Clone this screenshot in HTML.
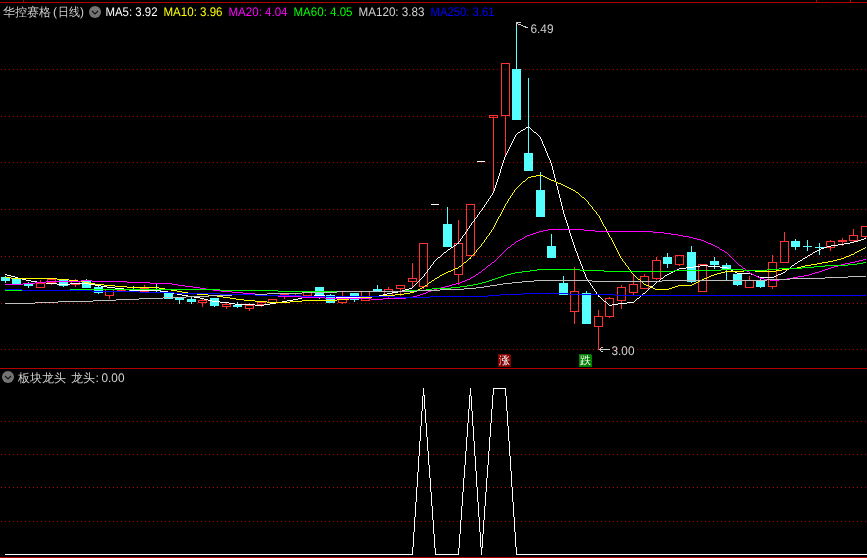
<!DOCTYPE html>
<html lang="zh"><head><meta charset="utf-8"><title>华控赛格(日线)</title>
<style>html,body{margin:0;padding:0;background:#000;overflow:hidden}svg{display:block;position:absolute;left:0;top:0}svg.txt{will-change:transform}</style></head>
<body>
<svg width="867" height="558" viewBox="0 0 867 558" shape-rendering="crispEdges">
<rect width="867" height="558" fill="#000"/>
<line x1="1" y1="69.5" x2="867" y2="69.5" stroke="#b00000" stroke-width="1" stroke-dasharray="1 3"/>
<line x1="1" y1="116.5" x2="867" y2="116.5" stroke="#b00000" stroke-width="1" stroke-dasharray="1 3"/>
<line x1="1" y1="162.5" x2="867" y2="162.5" stroke="#b00000" stroke-width="1" stroke-dasharray="1 3"/>
<line x1="1" y1="209.5" x2="867" y2="209.5" stroke="#b00000" stroke-width="1" stroke-dasharray="1 3"/>
<line x1="1" y1="256.5" x2="867" y2="256.5" stroke="#b00000" stroke-width="1" stroke-dasharray="1 3"/>
<line x1="1" y1="303.5" x2="867" y2="303.5" stroke="#b00000" stroke-width="1" stroke-dasharray="1 3"/>
<line x1="1" y1="349.5" x2="867" y2="349.5" stroke="#b00000" stroke-width="1" stroke-dasharray="1 3"/>
<line x1="1" y1="421.5" x2="867" y2="421.5" stroke="#b00000" stroke-width="1" stroke-dasharray="1 3"/>
<line x1="1" y1="454.5" x2="867" y2="454.5" stroke="#b00000" stroke-width="1" stroke-dasharray="1 3"/>
<line x1="1" y1="487.5" x2="867" y2="487.5" stroke="#b00000" stroke-width="1" stroke-dasharray="1 3"/>
<line x1="1" y1="521.5" x2="867" y2="521.5" stroke="#b00000" stroke-width="1" stroke-dasharray="1 3"/>
<rect x="0" y="2" width="867" height="1" fill="#b00000"/>
<rect x="23" y="0" width="1" height="3" fill="#b00000"/>
<rect x="816" y="0" width="1" height="3" fill="#b00000"/>
<rect x="850" y="0" width="1" height="3" fill="#b00000"/>
<rect x="0" y="368" width="867" height="1" fill="#b00000"/>
<rect x="0" y="557" width="867" height="1" fill="#b00000"/>
<rect x="5" y="276" width="1" height="7" fill="#54ffff"/>
<rect x="1" y="277" width="9" height="4" fill="#54ffff"/>
<rect x="16" y="278" width="1" height="6" fill="#54ffff"/>
<rect x="12" y="278" width="9" height="6" fill="#54ffff"/>
<rect x="28" y="282" width="1" height="6" fill="#54ffff"/>
<rect x="24" y="284" width="9" height="2" fill="#54ffff"/>
<rect x="40" y="280" width="1" height="3" fill="#ff3232"/>
<rect x="36.5" y="283.5" width="8" height="4" fill="none" stroke="#ff3232" stroke-width="1"/>
<rect x="51" y="283" width="1" height="2" fill="#ff3232"/>
<rect x="47.5" y="279.5" width="8" height="3" fill="none" stroke="#ff3232" stroke-width="1"/>
<rect x="63" y="280" width="1" height="7" fill="#54ffff"/>
<rect x="59" y="280" width="9" height="6" fill="#54ffff"/>
<rect x="75" y="279" width="1" height="2" fill="#ff3232"/>
<rect x="75" y="285" width="1" height="2" fill="#ff3232"/>
<rect x="71.5" y="281.5" width="8" height="3" fill="none" stroke="#ff3232" stroke-width="1"/>
<rect x="86" y="279" width="1" height="9" fill="#54ffff"/>
<rect x="82" y="280" width="9" height="8" fill="#54ffff"/>
<rect x="98" y="286" width="1" height="8" fill="#54ffff"/>
<rect x="94" y="287" width="9" height="6" fill="#54ffff"/>
<rect x="109" y="296" width="1" height="3" fill="#ff3232"/>
<rect x="105.5" y="289.5" width="8" height="6" fill="none" stroke="#ff3232" stroke-width="1"/>
<rect x="117" y="290" width="9" height="1" fill="#ff3232"/>
<rect x="133" y="286" width="1" height="5" fill="#54ffff"/>
<rect x="129" y="289" width="9" height="2" fill="#54ffff"/>
<rect x="144" y="285" width="1" height="3" fill="#ff3232"/>
<rect x="140.5" y="288.5" width="8" height="3" fill="none" stroke="#ff3232" stroke-width="1"/>
<rect x="156" y="284" width="1" height="9" fill="#54ffff"/>
<rect x="152" y="290" width="9" height="1" fill="#54ffff"/>
<rect x="168" y="293" width="1" height="6" fill="#54ffff"/>
<rect x="164" y="293" width="9" height="6" fill="#54ffff"/>
<rect x="179" y="298" width="1" height="6" fill="#54ffff"/>
<rect x="175" y="298" width="9" height="2" fill="#54ffff"/>
<rect x="191" y="297" width="1" height="7" fill="#54ffff"/>
<rect x="187" y="299" width="9" height="3" fill="#54ffff"/>
<rect x="202" y="298" width="1" height="2" fill="#ff3232"/>
<rect x="202" y="303" width="1" height="4" fill="#ff3232"/>
<rect x="198.5" y="300.5" width="8" height="2" fill="none" stroke="#ff3232" stroke-width="1"/>
<rect x="214" y="298" width="1" height="9" fill="#54ffff"/>
<rect x="210" y="298" width="9" height="8" fill="#54ffff"/>
<rect x="226" y="303" width="1" height="1" fill="#ff3232"/>
<rect x="226" y="307" width="1" height="2" fill="#ff3232"/>
<rect x="222.5" y="304.5" width="8" height="2" fill="none" stroke="#ff3232" stroke-width="1"/>
<rect x="237" y="302" width="1" height="6" fill="#54ffff"/>
<rect x="233" y="305" width="9" height="2" fill="#54ffff"/>
<rect x="249" y="303" width="1" height="2" fill="#ff3232"/>
<rect x="249" y="309" width="1" height="2" fill="#ff3232"/>
<rect x="245.5" y="305.5" width="8" height="3" fill="none" stroke="#ff3232" stroke-width="1"/>
<rect x="261" y="305" width="1" height="2" fill="#ff3232"/>
<rect x="257.5" y="302.5" width="8" height="2" fill="none" stroke="#ff3232" stroke-width="1"/>
<rect x="268.5" y="299.5" width="8" height="3" fill="none" stroke="#ff3232" stroke-width="1"/>
<rect x="284" y="295" width="1" height="4" fill="#ff3232"/>
<rect x="280" y="294" width="9" height="1" fill="#ff3232"/>
<rect x="295" y="294" width="1" height="1" fill="#ff3232"/>
<rect x="291" y="293" width="9" height="1" fill="#ff3232"/>
<rect x="303.5" y="292.5" width="8" height="3" fill="none" stroke="#ff3232" stroke-width="1"/>
<rect x="319" y="287" width="1" height="12" fill="#54ffff"/>
<rect x="315" y="287" width="9" height="9" fill="#54ffff"/>
<rect x="330" y="294" width="1" height="9" fill="#54ffff"/>
<rect x="326" y="295" width="9" height="8" fill="#54ffff"/>
<rect x="342" y="292" width="1" height="5" fill="#ff3232"/>
<rect x="342" y="303" width="1" height="1" fill="#ff3232"/>
<rect x="338.5" y="297.5" width="8" height="5" fill="none" stroke="#ff3232" stroke-width="1"/>
<rect x="354" y="293" width="1" height="9" fill="#54ffff"/>
<rect x="350" y="293" width="9" height="7" fill="#54ffff"/>
<rect x="361.5" y="291.5" width="8" height="9" fill="none" stroke="#ff3232" stroke-width="1"/>
<rect x="377" y="285" width="1" height="6" fill="#54ffff"/>
<rect x="373" y="289" width="9" height="2" fill="#54ffff"/>
<rect x="388" y="287" width="1" height="2" fill="#ff3232"/>
<rect x="388" y="297" width="1" height="1" fill="#ff3232"/>
<rect x="384.5" y="289.5" width="8" height="7" fill="none" stroke="#ff3232" stroke-width="1"/>
<rect x="400" y="289" width="1" height="7" fill="#ff3232"/>
<rect x="396.5" y="285.5" width="8" height="3" fill="none" stroke="#ff3232" stroke-width="1"/>
<rect x="412" y="263" width="1" height="15" fill="#ff3232"/>
<rect x="412" y="282" width="1" height="5" fill="#ff3232"/>
<rect x="408.5" y="278.5" width="8" height="3" fill="none" stroke="#ff3232" stroke-width="1"/>
<rect x="423" y="287" width="1" height="2" fill="#ff3232"/>
<rect x="419.5" y="243.5" width="8" height="43" fill="none" stroke="#ff3232" stroke-width="1"/>
<rect x="431" y="204" width="8" height="1" fill="#fff"/>
<rect x="447" y="207" width="1" height="40" fill="#54ffff"/>
<rect x="443" y="224" width="9" height="23" fill="#54ffff"/>
<rect x="458" y="220" width="1" height="23" fill="#ff3232"/>
<rect x="458" y="275" width="1" height="10" fill="#ff3232"/>
<rect x="454.5" y="243.5" width="8" height="31" fill="none" stroke="#ff3232" stroke-width="1"/>
<rect x="466.5" y="204.5" width="8" height="51" fill="none" stroke="#ff3232" stroke-width="1"/>
<rect x="477" y="161" width="8" height="1" fill="#fff"/>
<rect x="493" y="118" width="1" height="74" fill="#ff3232"/>
<rect x="489.5" y="115.5" width="8" height="2" fill="none" stroke="#ff3232" stroke-width="1"/>
<rect x="505" y="116" width="1" height="40" fill="#ff3232"/>
<rect x="501.5" y="63.5" width="8" height="52" fill="none" stroke="#ff3232" stroke-width="1"/>
<rect x="516" y="24" width="1" height="96" fill="#54ffff"/>
<rect x="512" y="69" width="9" height="51" fill="#54ffff"/>
<rect x="528" y="78" width="1" height="93" fill="#54ffff"/>
<rect x="524" y="153" width="9" height="18" fill="#54ffff"/>
<rect x="540" y="172" width="1" height="45" fill="#54ffff"/>
<rect x="536" y="190" width="9" height="27" fill="#54ffff"/>
<rect x="551" y="234" width="1" height="24" fill="#54ffff"/>
<rect x="547" y="246" width="9" height="12" fill="#54ffff"/>
<rect x="563" y="276" width="1" height="19" fill="#54ffff"/>
<rect x="559" y="283" width="9" height="12" fill="#54ffff"/>
<rect x="574" y="267" width="1" height="24" fill="#ff3232"/>
<rect x="574" y="312" width="1" height="12" fill="#ff3232"/>
<rect x="570.5" y="291.5" width="8" height="20" fill="none" stroke="#ff3232" stroke-width="1"/>
<rect x="586" y="291" width="1" height="33" fill="#54ffff"/>
<rect x="582" y="293" width="9" height="31" fill="#54ffff"/>
<rect x="598" y="310" width="1" height="6" fill="#ff3232"/>
<rect x="598" y="327" width="1" height="23" fill="#ff3232"/>
<rect x="594.5" y="316.5" width="8" height="10" fill="none" stroke="#ff3232" stroke-width="1"/>
<rect x="609" y="297" width="1" height="1" fill="#ff3232"/>
<rect x="609" y="317" width="1" height="1" fill="#ff3232"/>
<rect x="605.5" y="298.5" width="8" height="18" fill="none" stroke="#ff3232" stroke-width="1"/>
<rect x="621" y="285" width="1" height="2" fill="#ff3232"/>
<rect x="621" y="301" width="1" height="8" fill="#ff3232"/>
<rect x="617.5" y="287.5" width="8" height="13" fill="none" stroke="#ff3232" stroke-width="1"/>
<rect x="633" y="275" width="1" height="9" fill="#ff3232"/>
<rect x="633" y="293" width="1" height="2" fill="#ff3232"/>
<rect x="629.5" y="284.5" width="8" height="8" fill="none" stroke="#ff3232" stroke-width="1"/>
<rect x="644" y="274" width="1" height="2" fill="#ff3232"/>
<rect x="640.5" y="276.5" width="8" height="12" fill="none" stroke="#ff3232" stroke-width="1"/>
<rect x="656" y="257" width="1" height="3" fill="#ff3232"/>
<rect x="656" y="279" width="1" height="1" fill="#ff3232"/>
<rect x="652.5" y="260.5" width="8" height="18" fill="none" stroke="#ff3232" stroke-width="1"/>
<rect x="667" y="253" width="1" height="15" fill="#54ffff"/>
<rect x="663" y="257" width="9" height="7" fill="#54ffff"/>
<rect x="679" y="265" width="1" height="1" fill="#ff3232"/>
<rect x="675.5" y="255.5" width="8" height="9" fill="none" stroke="#ff3232" stroke-width="1"/>
<rect x="691" y="246" width="1" height="37" fill="#54ffff"/>
<rect x="687" y="252" width="9" height="30" fill="#54ffff"/>
<rect x="698.5" y="264.5" width="8" height="27" fill="none" stroke="#ff3232" stroke-width="1"/>
<rect x="714" y="257" width="1" height="12" fill="#54ffff"/>
<rect x="710" y="261" width="9" height="4" fill="#54ffff"/>
<rect x="726" y="263" width="1" height="18" fill="#54ffff"/>
<rect x="722" y="265" width="9" height="5" fill="#54ffff"/>
<rect x="737" y="274" width="1" height="12" fill="#54ffff"/>
<rect x="733" y="274" width="9" height="11" fill="#54ffff"/>
<rect x="749" y="276" width="1" height="4" fill="#ff3232"/>
<rect x="745.5" y="280.5" width="8" height="7" fill="none" stroke="#ff3232" stroke-width="1"/>
<rect x="760" y="279" width="1" height="9" fill="#54ffff"/>
<rect x="756" y="280" width="9" height="7" fill="#54ffff"/>
<rect x="772" y="255" width="1" height="7" fill="#ff3232"/>
<rect x="772" y="287" width="1" height="2" fill="#ff3232"/>
<rect x="768.5" y="262.5" width="8" height="24" fill="none" stroke="#ff3232" stroke-width="1"/>
<rect x="784" y="232" width="1" height="9" fill="#ff3232"/>
<rect x="780.5" y="241.5" width="8" height="21" fill="none" stroke="#ff3232" stroke-width="1"/>
<rect x="795" y="239" width="1" height="11" fill="#54ffff"/>
<rect x="791" y="241" width="9" height="6" fill="#54ffff"/>
<rect x="807" y="240" width="1" height="11" fill="#54ffff"/>
<rect x="803" y="246" width="9" height="1" fill="#54ffff"/>
<rect x="819" y="243" width="1" height="12" fill="#54ffff"/>
<rect x="815" y="247" width="9" height="1" fill="#54ffff"/>
<rect x="830" y="240" width="1" height="1" fill="#ff3232"/>
<rect x="830" y="248" width="1" height="3" fill="#ff3232"/>
<rect x="826.5" y="241.5" width="8" height="6" fill="none" stroke="#ff3232" stroke-width="1"/>
<rect x="842" y="238" width="1" height="8" fill="#ff3232"/>
<rect x="838" y="240" width="9" height="2" fill="#ff3232"/>
<rect x="853" y="229" width="1" height="6" fill="#ff3232"/>
<rect x="853" y="241" width="1" height="2" fill="#ff3232"/>
<rect x="849.5" y="235.5" width="8" height="5" fill="none" stroke="#ff3232" stroke-width="1"/>
<rect x="865" y="237" width="1" height="1" fill="#ff3232"/>
<rect x="861.5" y="226.5" width="8" height="10" fill="none" stroke="#ff3232" stroke-width="1"/>
<path fill="#ffffff" d="M526 127h2v1h-2zM523 129h2v1h-2zM521 130h2v1h-2zM518 132h2v1h-2zM534 132h2v1h-2zM864 238h2v1h-2zM861 239h3v1h-3zM858 240h3v1h-3zM854 241h4v1h-4zM850 242h4v1h-4zM457 243h2v1h-2zM844 243h6v1h-6zM838 244h6v1h-6zM454 245h2v1h-2zM831 245h7v1h-7zM827 246h4v1h-4zM451 247h2v1h-2zM824 247h3v1h-3zM821 248h3v1h-3zM448 249h2v1h-2zM819 249h2v1h-2zM817 250h2v1h-2zM815 251h2v1h-2zM444 252h2v1h-2zM813 252h2v1h-2zM810 254h2v1h-2zM808 255h2v1h-2zM438 257h2v1h-2zM805 257h2v1h-2zM803 258h2v1h-2zM800 260h2v1h-2zM798 261h2v1h-2zM795 263h2v1h-2zM700 265h8v1h-8zM792 265h2v1h-2zM694 266h6v1h-6zM708 266h12v1h-12zM686 267h8v1h-8zM720 267h7v1h-7zM679 268h7v1h-7zM727 268h2v1h-2zM677 269h2v1h-2zM729 269h2v1h-2zM787 269h2v1h-2zM675 270h2v1h-2zM731 270h2v1h-2zM673 271h2v1h-2zM733 271h2v1h-2zM671 272h2v1h-2zM735 272h2v1h-2zM783 272h2v1h-2zM669 273h2v1h-2zM737 273h14v1h-14zM781 273h2v1h-2zM5 274h2v1h-2zM667 274h2v1h-2zM751 274h3v1h-3zM778 274h3v1h-3zM7 275h4v1h-4zM665 275h2v1h-2zM754 275h2v1h-2zM776 275h2v1h-2zM11 276h4v1h-4zM756 276h3v1h-3zM774 276h2v1h-2zM15 277h3v1h-3zM759 277h15v1h-15zM18 278h4v1h-4zM661 278h2v1h-2zM22 279h4v1h-4zM26 280h5v1h-5zM31 281h6v1h-6zM657 281h2v1h-2zM37 282h9v1h-9zM46 283h11v1h-11zM70 283h19v1h-19zM57 284h13v1h-13zM89 284h6v1h-6zM95 285h6v1h-6zM101 286h6v1h-6zM651 286h2v1h-2zM107 287h8v1h-8zM115 288h9v1h-9zM409 288h3v1h-3zM124 289h6v1h-6zM405 289h4v1h-4zM130 290h30v1h-30zM402 290h3v1h-3zM160 291h8v1h-8zM398 291h4v1h-4zM168 292h5v1h-5zM392 292h6v1h-6zM173 293h4v1h-4zM387 293h5v1h-5zM643 293h2v1h-2zM177 294h5v1h-5zM383 294h4v1h-4zM182 295h6v1h-6zM314 295h11v1h-11zM379 295h4v1h-4zM188 296h6v1h-6zM306 296h8v1h-8zM325 296h11v1h-11zM360 296h19v1h-19zM598 296h2v1h-2zM194 297h6v1h-6zM302 297h4v1h-4zM336 297h24v1h-24zM200 298h4v1h-4zM298 298h4v1h-4zM637 298h2v1h-2zM204 299h4v1h-4zM293 299h5v1h-5zM208 300h4v1h-4zM287 300h6v1h-6zM212 301h8v1h-8zM282 301h5v1h-5zM604 301h2v1h-2zM220 302h9v1h-9zM276 302h6v1h-6zM627 302h7v1h-7zM229 303h6v1h-6zM270 303h6v1h-6zM618 303h9v1h-9zM235 304h20v1h-20zM264 304h6v1h-6zM612 304h6v1h-6zM255 305h9v1h-9zM609 305h3v1h-3zM434 261h1v1h-1zM554 174h1v4h-1zM504 157h1v3h-1zM492 193h1v2h-1zM517 133h1v1h-1zM557 186h1v4h-1zM464 234h1v1h-1zM509 147h1v2h-1zM577 253h1v3h-1zM476 217h1v1h-1zM532 130h1v1h-1zM649 288h1v1h-1zM570 233h1v3h-1zM560 198h1v4h-1zM488 199h1v2h-1zM543 144h1v2h-1zM563 210h1v4h-1zM556 182h1v4h-1zM653 285h1v1h-1zM501 166h1v3h-1zM567 223h1v3h-1zM550 160h1v3h-1zM786 270h1v1h-1zM500 169h1v4h-1zM656 282h1v1h-1zM553 170h1v4h-1zM413 286h1v1h-1zM660 279h1v1h-1zM542 141h1v3h-1zM508 149h1v2h-1zM797 262h1v1h-1zM640 296h1v1h-1zM581 264h1v2h-1zM573 242h1v3h-1zM425 273h1v1h-1zM460 239h1v2h-1zM790 267h1v1h-1zM428 269h1v1h-1zM566 220h1v3h-1zM549 158h1v2h-1zM531 129h1v1h-1zM484 205h1v2h-1zM420 279h1v1h-1zM588 280h1v2h-1zM552 166h1v4h-1zM467 229h1v2h-1zM512 141h1v2h-1zM664 276h1v1h-1zM545 148h1v3h-1zM479 212h1v2h-1zM491 195h1v1h-1zM503 160h1v3h-1zM436 259h1v1h-1zM559 194h1v4h-1zM440 256h1v1h-1zM431 265h1v1h-1zM580 261h1v3h-1zM565 217h1v3h-1zM576 251h1v2h-1zM495 185h1v3h-1zM507 151h1v2h-1zM587 279h1v1h-1zM443 253h1v1h-1zM544 146h1v2h-1zM569 229h1v4h-1zM447 250h1v1h-1zM562 206h1v4h-1zM812 253h1v1h-1zM537 134h1v1h-1zM424 274h1v2h-1zM555 178h1v4h-1zM494 188h1v3h-1zM558 190h1v4h-1zM538 135h1v1h-1zM415 284h1v1h-1zM551 163h1v3h-1zM548 156h1v2h-1zM586 277h1v2h-1zM463 235h1v1h-1zM466 231h1v1h-1zM514 137h1v2h-1zM478 214h1v1h-1zM490 196h1v2h-1zM590 283h1v2h-1zM575 248h1v3h-1zM427 270h1v2h-1zM541 139h1v2h-1zM498 176h1v3h-1zM601 298h1v1h-1zM582 266h1v3h-1zM572 239h1v3h-1zM469 226h1v2h-1zM481 210h1v1h-1zM655 283h1v1h-1zM506 153h1v2h-1zM419 280h1v1h-1zM561 202h1v4h-1zM533 131h1v1h-1zM642 294h1v1h-1zM600 297h1v1h-1zM646 291h1v1h-1zM635 300h1v1h-1zM430 266h1v2h-1zM568 226h1v3h-1zM540 137h1v2h-1zM462 236h1v2h-1zM513 139h1v2h-1zM474 219h1v2h-1zM453 246h1v1h-1zM422 277h1v1h-1zM571 236h1v3h-1zM579 259h1v2h-1zM547 153h1v3h-1zM585 274h1v3h-1zM497 179h1v3h-1zM442 254h1v1h-1zM589 282h1v1h-1zM433 262h1v2h-1zM465 232h1v2h-1zM477 215h1v2h-1zM578 256h1v3h-1zM607 303h1v1h-1zM802 259h1v1h-1zM592 286h1v2h-1zM564 214h1v3h-1zM493 191h1v2h-1zM417 282h1v1h-1zM593 288h1v1h-1zM574 245h1v3h-1zM596 292h1v2h-1zM496 182h1v3h-1zM516 134h1v1h-1zM539 136h1v1h-1zM603 300h1v1h-1zM794 264h1v1h-1zM528 126h1v1h-1zM606 302h1v1h-1zM472 222h1v1h-1zM475 218h1v1h-1zM520 131h1v1h-1zM648 289h1v1h-1zM487 201h1v1h-1zM499 173h1v3h-1zM641 295h1v1h-1zM584 272h1v2h-1zM505 155h1v2h-1zM421 278h1v1h-1zM511 143h1v2h-1zM468 228h1v1h-1zM412 287h1v1h-1zM480 211h1v1h-1zM591 285h1v1h-1zM546 151h1v2h-1zM594 289h1v2h-1zM645 292h1v1h-1zM429 268h1v1h-1zM595 291h1v1h-1zM459 241h1v1h-1zM602 299h1v1h-1zM471 223h1v2h-1zM456 244h1v1h-1zM483 207h1v1h-1zM659 280h1v1h-1zM663 277h1v1h-1zM432 264h1v1h-1zM435 260h1v1h-1zM416 283h1v1h-1zM583 269h1v3h-1zM515 135h1v2h-1zM639 297h1v1h-1zM785 271h1v1h-1zM486 202h1v2h-1zM789 268h1v1h-1zM502 163h1v3h-1zM608 304h1v1h-1zM423 276h1v1h-1zM598 295h1v1h-1zM636 299h1v1h-1zM446 251h1v1h-1zM450 248h1v1h-1zM530 128h1v1h-1zM482 208h1v2h-1zM807 256h1v1h-1zM597 294h1v1h-1zM510 145h1v2h-1zM650 287h1v1h-1zM414 285h1v1h-1zM654 284h1v1h-1zM647 290h1v1h-1zM529 127h1v1h-1zM634 301h1v1h-1zM426 272h1v1h-1zM791 266h1v1h-1zM458 242h1v1h-1zM461 238h1v1h-1zM470 225h1v1h-1zM473 221h1v1h-1zM489 198h1v1h-1zM525 128h1v1h-1zM536 133h1v1h-1zM437 258h1v1h-1zM485 204h1v1h-1zM418 281h1v1h-1zM441 255h1v1h-1z"/>
<path fill="#ffff00" d="M536 175h7v1h-7zM531 176h5v1h-5zM543 176h2v1h-2zM528 177h3v1h-3zM545 177h2v1h-2zM547 178h2v1h-2zM549 179h2v1h-2zM551 180h3v1h-3zM523 181h2v1h-2zM554 181h2v1h-2zM556 182h2v1h-2zM558 183h3v1h-3zM561 184h2v1h-2zM563 185h2v1h-2zM565 186h2v1h-2zM567 187h2v1h-2zM569 188h2v1h-2zM571 189h2v1h-2zM573 190h2v1h-2zM576 192h2v1h-2zM582 197h2v1h-2zM863 248h2v1h-2zM861 249h2v1h-2zM859 250h2v1h-2zM857 251h2v1h-2zM855 252h2v1h-2zM851 254h3v1h-3zM849 255h2v1h-2zM846 256h3v1h-3zM844 257h2v1h-2zM469 258h2v1h-2zM841 258h3v1h-3zM837 259h4v1h-4zM833 260h4v1h-4zM828 261h5v1h-5zM464 262h2v1h-2zM822 262h6v1h-6zM817 263h5v1h-5zM811 264h6v1h-6zM805 265h6v1h-6zM459 266h2v1h-2zM801 266h4v1h-4zM797 267h4v1h-4zM455 268h3v1h-3zM789 268h8v1h-8zM453 269h2v1h-2zM782 269h7v1h-7zM451 270h2v1h-2zM744 270h11v1h-11zM776 270h6v1h-6zM448 271h3v1h-3zM725 271h19v1h-19zM755 271h21v1h-21zM446 272h2v1h-2zM721 272h4v1h-4zM444 273h2v1h-2zM717 273h4v1h-4zM442 274h2v1h-2zM714 274h3v1h-3zM440 275h2v1h-2zM711 275h3v1h-3zM709 276h2v1h-2zM5 277h6v1h-6zM437 277h2v1h-2zM707 277h2v1h-2zM11 278h46v1h-46zM435 278h2v1h-2zM704 278h3v1h-3zM57 279h12v1h-12zM638 279h2v1h-2zM702 279h2v1h-2zM69 280h9v1h-9zM432 280h2v1h-2zM700 280h2v1h-2zM78 281h6v1h-6zM698 281h2v1h-2zM84 282h5v1h-5zM429 282h2v1h-2zM696 282h2v1h-2zM89 283h6v1h-6zM694 283h2v1h-2zM95 284h9v1h-9zM644 284h2v1h-2zM692 284h2v1h-2zM104 285h11v1h-11zM425 285h2v1h-2zM646 285h3v1h-3zM678 285h14v1h-14zM115 286h12v1h-12zM649 286h2v1h-2zM675 286h3v1h-3zM127 287h32v1h-32zM422 287h2v1h-2zM651 287h2v1h-2zM672 287h3v1h-3zM159 288h6v1h-6zM420 288h2v1h-2zM653 288h2v1h-2zM669 288h3v1h-3zM165 289h6v1h-6zM418 289h2v1h-2zM655 289h14v1h-14zM171 290h6v1h-6zM416 290h2v1h-2zM177 291h5v1h-5zM414 291h2v1h-2zM182 292h6v1h-6zM410 292h4v1h-4zM188 293h9v1h-9zM404 293h6v1h-6zM197 294h11v1h-11zM395 294h9v1h-9zM208 295h9v1h-9zM383 295h12v1h-12zM217 296h6v1h-6zM372 296h11v1h-11zM223 297h7v1h-7zM360 297h12v1h-12zM230 298h6v1h-6zM349 298h11v1h-11zM236 299h8v1h-8zM337 299h12v1h-12zM244 300h11v1h-11zM302 300h35v1h-35zM255 301h12v1h-12zM290 301h12v1h-12zM267 302h23v1h-23zM603 224h1v2h-1zM611 238h1v2h-1zM521 183h1v1h-1zM618 252h1v2h-1zM605 227h1v2h-1zM505 204h1v2h-1zM507 201h1v2h-1zM587 201h1v1h-1zM619 254h1v2h-1zM608 233h1v2h-1zM596 212h1v2h-1zM519 185h1v1h-1zM497 219h1v2h-1zM520 184h1v1h-1zM499 216h1v1h-1zM525 180h1v1h-1zM506 203h1v1h-1zM601 220h1v2h-1zM467 260h1v1h-1zM615 246h1v2h-1zM475 252h1v1h-1zM598 215h1v1h-1zM602 222h1v2h-1zM628 267h1v2h-1zM616 248h1v2h-1zM473 254h1v1h-1zM501 212h1v2h-1zM584 198h1v1h-1zM503 208h1v2h-1zM609 235h1v2h-1zM495 223h1v2h-1zM585 199h1v1h-1zM502 210h1v2h-1zM513 192h1v1h-1zM599 216h1v2h-1zM614 244h1v2h-1zM483 242h1v1h-1zM594 210h1v1h-1zM621 258h1v1h-1zM610 237h1v1h-1zM630 270h1v1h-1zM493 227h1v2h-1zM500 214h1v2h-1zM481 244h1v2h-1zM526 179h1v1h-1zM607 231h1v2h-1zM480 246h1v1h-1zM479 247h1v1h-1zM434 279h1v1h-1zM489 233h1v2h-1zM491 230h1v2h-1zM631 271h1v2h-1zM492 229h1v1h-1zM494 225h1v2h-1zM625 263h1v2h-1zM604 226h1v1h-1zM498 217h1v2h-1zM600 218h1v2h-1zM478 248h1v1h-1zM477 249h1v1h-1zM476 250h1v2h-1zM424 286h1v1h-1zM622 259h1v2h-1zM588 202h1v2h-1zM597 214h1v1h-1zM641 281h1v1h-1zM474 253h1v1h-1zM517 187h1v1h-1zM518 186h1v1h-1zM428 283h1v1h-1zM496 221h1v2h-1zM592 207h1v2h-1zM612 240h1v2h-1zM515 189h1v1h-1zM514 190h1v2h-1zM516 188h1v1h-1zM510 196h1v2h-1zM512 193h1v2h-1zM578 193h1v1h-1zM486 237h1v2h-1zM484 240h1v2h-1zM471 256h1v1h-1zM504 206h1v2h-1zM613 242h1v2h-1zM482 243h1v1h-1zM579 194h1v1h-1zM617 250h1v2h-1zM606 229h1v2h-1zM640 280h1v1h-1zM620 256h1v2h-1zM595 211h1v1h-1zM508 199h1v2h-1zM580 195h1v1h-1zM590 205h1v1h-1zM626 265h1v1h-1zM581 196h1v1h-1zM427 284h1v1h-1zM642 282h1v1h-1zM472 255h1v1h-1zM431 281h1v1h-1zM643 283h1v1h-1zM627 266h1v1h-1zM593 209h1v1h-1zM854 253h1v1h-1zM470 257h1v1h-1zM488 235h1v1h-1zM490 232h1v1h-1zM623 261h1v1h-1zM458 267h1v1h-1zM632 273h1v1h-1zM463 263h1v1h-1zM485 239h1v1h-1zM487 236h1v1h-1zM637 278h1v1h-1zM624 262h1v1h-1zM633 274h1v1h-1zM462 264h1v1h-1zM468 259h1v1h-1zM589 204h1v1h-1zM461 265h1v1h-1zM466 261h1v1h-1zM591 206h1v1h-1zM634 275h1v1h-1zM509 198h1v1h-1zM511 195h1v1h-1zM635 276h1v1h-1zM586 200h1v1h-1zM527 178h1v1h-1zM865 247h1v1h-1zM629 269h1v1h-1zM439 276h1v1h-1zM636 277h1v1h-1zM522 182h1v1h-1zM575 191h1v1h-1z"/>
<path fill="#ff00ff" d="M548 229h36v1h-36zM543 230h5v1h-5zM584 230h11v1h-11zM539 231h4v1h-4zM595 231h58v1h-58zM536 232h3v1h-3zM653 232h11v1h-11zM533 233h3v1h-3zM664 233h7v1h-7zM530 234h3v1h-3zM671 234h7v1h-7zM527 235h3v1h-3zM678 235h5v1h-5zM525 236h2v1h-2zM683 236h6v1h-6zM689 237h4v1h-4zM522 238h2v1h-2zM693 238h4v1h-4zM520 239h2v1h-2zM697 239h4v1h-4zM518 240h2v1h-2zM701 240h3v1h-3zM516 241h2v1h-2zM704 241h2v1h-2zM706 242h2v1h-2zM708 243h3v1h-3zM512 244h2v1h-2zM711 244h2v1h-2zM713 245h2v1h-2zM715 246h2v1h-2zM508 247h2v1h-2zM717 247h2v1h-2zM720 249h2v1h-2zM722 250h2v1h-2zM725 252h2v1h-2zM863 259h3v1h-3zM859 260h4v1h-4zM855 261h4v1h-4zM492 262h2v1h-2zM850 262h5v1h-5zM845 263h5v1h-5zM841 264h4v1h-4zM488 265h2v1h-2zM739 265h2v1h-2zM838 265h3v1h-3zM834 266h4v1h-4zM831 267h3v1h-3zM743 268h2v1h-2zM828 268h3v1h-3zM483 269h2v1h-2zM825 269h3v1h-3zM822 270h3v1h-3zM747 271h2v1h-2zM819 271h3v1h-3zM479 272h2v1h-2zM815 272h4v1h-4zM750 273h2v1h-2zM812 273h3v1h-3zM476 274h2v1h-2zM752 274h2v1h-2zM809 274h3v1h-3zM754 275h2v1h-2zM804 275h5v1h-5zM473 276h2v1h-2zM756 276h2v1h-2zM798 276h6v1h-6zM471 277h2v1h-2zM758 277h2v1h-2zM793 277h5v1h-5zM760 278h4v1h-4zM787 278h6v1h-6zM467 279h3v1h-3zM764 279h6v1h-6zM779 279h8v1h-8zM81 280h11v1h-11zM465 280h2v1h-2zM770 280h9v1h-9zM46 281h35v1h-35zM92 281h35v1h-35zM462 281h3v1h-3zM35 282h11v1h-11zM127 282h23v1h-23zM460 282h2v1h-2zM23 283h12v1h-12zM150 283h22v1h-22zM456 283h4v1h-4zM5 284h18v1h-18zM172 284h6v1h-6zM452 284h4v1h-4zM178 285h7v1h-7zM449 285h3v1h-3zM185 286h8v1h-8zM445 286h4v1h-4zM193 287h7v1h-7zM441 287h4v1h-4zM200 288h6v1h-6zM437 288h4v1h-4zM206 289h7v1h-7zM434 289h3v1h-3zM213 290h8v1h-8zM431 290h3v1h-3zM221 291h11v1h-11zM428 291h3v1h-3zM232 292h11v1h-11zM426 292h2v1h-2zM243 293h12v1h-12zM423 293h3v1h-3zM255 294h12v1h-12zM420 294h3v1h-3zM267 295h11v1h-11zM417 295h3v1h-3zM278 296h23v1h-23zM413 296h4v1h-4zM301 297h24v1h-24zM406 297h7v1h-7zM325 298h46v1h-46zM383 298h23v1h-23zM371 299h12v1h-12zM500 255h1v1h-1zM470 278h1v1h-1zM734 260h1v1h-1zM507 248h1v1h-1zM742 267h1v1h-1zM478 273h1v1h-1zM499 256h1v1h-1zM730 256h1v1h-1zM482 270h1v1h-1zM498 257h1v1h-1zM506 249h1v1h-1zM749 272h1v1h-1zM735 261h1v1h-1zM511 245h1v1h-1zM481 271h1v1h-1zM738 264h1v1h-1zM515 242h1v1h-1zM487 266h1v1h-1zM746 270h1v1h-1zM486 267h1v1h-1zM505 250h1v1h-1zM491 263h1v1h-1zM510 246h1v1h-1zM496 259h1v1h-1zM736 262h1v1h-1zM497 258h1v1h-1zM731 257h1v1h-1zM504 251h1v1h-1zM503 252h1v1h-1zM724 251h1v1h-1zM732 258h1v1h-1zM490 264h1v1h-1zM727 253h1v1h-1zM728 254h1v1h-1zM737 263h1v1h-1zM495 260h1v1h-1zM514 243h1v1h-1zM485 268h1v1h-1zM502 253h1v1h-1zM733 259h1v1h-1zM494 261h1v1h-1zM719 248h1v1h-1zM501 254h1v1h-1zM475 275h1v1h-1zM741 266h1v1h-1zM524 237h1v1h-1zM729 255h1v1h-1zM745 269h1v1h-1z"/>
<path fill="#00ff00" d="M863 262h3v1h-3zM857 263h6v1h-6zM848 264h9v1h-9zM825 265h23v1h-23zM814 266h11v1h-11zM802 267h12v1h-12zM779 268h23v1h-23zM537 269h43v1h-43zM721 269h22v1h-22zM767 269h12v1h-12zM530 270h7v1h-7zM580 270h24v1h-24zM674 270h47v1h-47zM743 270h24v1h-24zM522 271h8v1h-8zM604 271h70v1h-70zM515 272h7v1h-7zM511 273h4v1h-4zM507 274h4v1h-4zM504 275h3v1h-3zM501 276h3v1h-3zM498 277h3v1h-3zM495 278h3v1h-3zM492 279h3v1h-3zM489 280h3v1h-3zM486 281h3v1h-3zM482 282h4v1h-4zM478 283h4v1h-4zM473 284h5v1h-5zM467 285h6v1h-6zM460 286h7v1h-7zM451 287h9v1h-9zM432 288h19v1h-19zM70 289h150v1h-150zM426 289h6v1h-6zM5 290h65v1h-65zM220 290h58v1h-58zM405 290h21v1h-21zM278 291h127v1h-127z"/>
<path fill="#c0c0c0" d="M848 276h18v1h-18zM825 277h23v1h-23zM790 278h35v1h-35zM767 279h23v1h-23zM534 280h58v1h-58zM662 280h105v1h-105zM522 281h12v1h-12zM592 281h70v1h-70zM512 282h10v1h-10zM503 283h9v1h-9zM497 284h6v1h-6zM490 285h7v1h-7zM484 286h6v1h-6zM476 287h8v1h-8zM464 288h12v1h-12zM440 289h24v1h-24zM417 290h23v1h-23zM337 291h80v1h-80zM302 292h35v1h-35zM267 293h35v1h-35zM232 294h35v1h-35zM209 295h23v1h-23zM186 296h23v1h-23zM163 297h23v1h-23zM139 298h24v1h-24zM116 299h23v1h-23zM93 300h23v1h-23zM58 301h35v1h-35zM35 302h23v1h-23zM5 303h30v1h-30z"/>
<path fill="#0000ff" d="M5 289h17v1h-17zM22 290h70v1h-70zM92 291h47v1h-47zM139 292h35v1h-35zM174 293h46v1h-46zM523 293h46v1h-46zM220 294h35v1h-35zM500 294h23v1h-23zM569 294h46v1h-46zM255 295h46v1h-46zM488 295h12v1h-12zM615 295h251v1h-251zM301 296h93v1h-93zM430 296h58v1h-58zM394 297h36v1h-36z"/>
<path fill="#ffffff" d="M493 388h13v1h-13zM423 395h2v1h-2zM469 395h2v1h-2zM481 547h2v1h-2zM5 554h408v1h-408zM435 554h24v1h-24zM516 554h351v1h-351zM414 517h1v15h-1zM482 534h1v13h-1zM471 396h1v15h-1zM516 547h1v7h-1zM489 437h1v14h-1zM511 471h1v16h-1zM421 411h1v15h-1zM430 478h1v14h-1zM473 426h1v15h-1zM415 502h1v15h-1zM513 502h1v15h-1zM422 396h1v15h-1zM459 534h1v14h-1zM420 426h1v15h-1zM479 517h1v15h-1zM460 520h1v14h-1zM466 437h1v14h-1zM476 471h1v16h-1zM487 465h1v13h-1zM483 520h1v14h-1zM481 548h1v7h-1zM425 409h1v14h-1zM467 423h1v14h-1zM465 451h1v14h-1zM488 451h1v14h-1zM508 426h1v15h-1zM433 520h1v14h-1zM478 502h1v15h-1zM427 437h1v14h-1zM505 389h1v7h-1zM419 441h1v15h-1zM464 465h1v13h-1zM510 456h1v15h-1zM413 532h1v15h-1zM435 548h1v6h-1zM475 456h1v15h-1zM424 396h1v13h-1zM458 548h1v6h-1zM507 411h1v15h-1zM492 395h1v14h-1zM486 478h1v14h-1zM470 388h1v7h-1zM493 389h1v6h-1zM515 532h1v15h-1zM432 506h1v14h-1zM412 547h1v7h-1zM480 532h1v15h-1zM429 465h1v13h-1zM512 487h1v15h-1zM468 409h1v14h-1zM485 492h1v14h-1zM426 423h1v14h-1zM463 478h1v14h-1zM469 396h1v13h-1zM418 456h1v16h-1zM423 388h1v7h-1zM462 492h1v14h-1zM509 441h1v15h-1zM416 487h1v15h-1zM491 409h1v14h-1zM417 472h1v15h-1zM434 534h1v14h-1zM472 411h1v15h-1zM506 396h1v15h-1zM461 506h1v14h-1zM431 492h1v14h-1zM490 423h1v14h-1zM477 487h1v15h-1zM514 517h1v15h-1zM484 506h1v14h-1zM428 451h1v14h-1zM474 441h1v15h-1z"/>
<path d="M498 354h11l2 2v11h-13z" fill="#800000"/>
<path d="M579 354h11l2 2v11h-13z" fill="#008000"/>
<path d="M516.5 27v-4.5h4M517 23.5l11 4.5" fill="none" stroke="#d0d0d0" stroke-width="1"/>
<path d="M599.5 349.5h10M599.5 349.5l3-2.5M599.5 349.5l3 2.5" fill="none" stroke="#d0d0d0" stroke-width="1"/>
<g shape-rendering="geometricPrecision"><circle cx="95" cy="12" r="6" fill="#747474"/><path d="M92 11l3 3l3-3" fill="none" stroke="#111" stroke-width="1.1"/></g>
<g shape-rendering="geometricPrecision"><circle cx="8" cy="377" r="6" fill="#747474"/><path d="M5 376l3 3l3-3" fill="none" stroke="#111" stroke-width="1.1"/></g>
</svg>
<svg class="txt" width="867" height="558" viewBox="0 0 867 558">
<g text-rendering="geometricPrecision">
<text fill="#d0d0d0" font-family="'Liberation Sans','WenQuanYi Zen Hei','Noto Sans CJK SC',sans-serif" font-size="12"><tspan x="3" y="15.7" textLength="48" lengthAdjust="spacingAndGlyphs">华控赛格</tspan><tspan x="53" y="15.5">(</tspan><tspan x="58" y="15.7" textLength="22" lengthAdjust="spacingAndGlyphs">日线</tspan><tspan x="80" y="15.5">)</tspan></text>
<text x="105.5" y="16" fill="#ffffff" font-family="'Liberation Sans','Noto Sans CJK SC',sans-serif" font-size="12.5" textLength="52" lengthAdjust="spacingAndGlyphs" >MA5: 3.92</text>
<text x="163.5" y="16" fill="#ffff00" font-family="'Liberation Sans','Noto Sans CJK SC',sans-serif" font-size="12.5" textLength="59" lengthAdjust="spacingAndGlyphs" >MA10: 3.96</text>
<text x="228.5" y="16" fill="#ff00ff" font-family="'Liberation Sans','Noto Sans CJK SC',sans-serif" font-size="12.5" textLength="59" lengthAdjust="spacingAndGlyphs" >MA20: 4.04</text>
<text x="293.5" y="16" fill="#00ff00" font-family="'Liberation Sans','Noto Sans CJK SC',sans-serif" font-size="12.5" textLength="59" lengthAdjust="spacingAndGlyphs" >MA60: 4.05</text>
<text x="358.5" y="16" fill="#d0d0d0" font-family="'Liberation Sans','Noto Sans CJK SC',sans-serif" font-size="12.5" textLength="66" lengthAdjust="spacingAndGlyphs" >MA120: 3.83</text>
<text x="430.5" y="16" fill="#0000ff" font-family="'Liberation Sans','Noto Sans CJK SC',sans-serif" font-size="12.5" textLength="64" lengthAdjust="spacingAndGlyphs" >MA250: 3.61</text>
<text x="530.5" y="33" fill="#d0d0d0" font-family="'Liberation Sans','Noto Sans CJK SC',sans-serif" font-size="12.5" textLength="23" lengthAdjust="spacingAndGlyphs" >6.49</text>
<text x="611.5" y="355" fill="#d0d0d0" font-family="'Liberation Sans','Noto Sans CJK SC',sans-serif" font-size="12.5" textLength="23" lengthAdjust="spacingAndGlyphs" >3.00</text>
<text fill="#d0d0d0" font-family="'Liberation Sans','WenQuanYi Zen Hei','Noto Sans CJK SC',sans-serif" font-size="12"><tspan x="18" y="381.5" textLength="48" lengthAdjust="spacingAndGlyphs">板块龙头</tspan> <tspan x="71" y="381.5" textLength="24" lengthAdjust="spacingAndGlyphs">龙头</tspan><tspan x="95.5" y="381.5" font-size="12.5">:</tspan> <tspan x="101.5" y="381.5" font-size="12.5" textLength="23" lengthAdjust="spacingAndGlyphs">0.00</tspan></text>
<text x="499" y="364" fill="#ffffff" font-family="'Liberation Sans','WenQuanYi Zen Hei','Noto Sans CJK SC',sans-serif" font-size="11" >涨</text>
<text x="580" y="364" fill="#ffffff" font-family="'Liberation Sans','WenQuanYi Zen Hei','Noto Sans CJK SC',sans-serif" font-size="11" >跌</text>
</g>
</svg>
</body></html>
